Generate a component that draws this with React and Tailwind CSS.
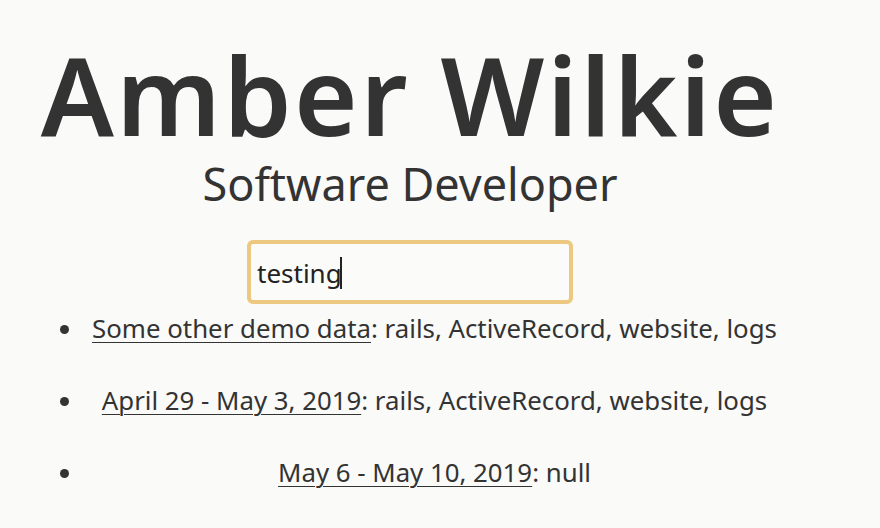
import React, { useState } from 'react';

const items = [
  { title: 'Some other demo data', tags: 'rails, ActiveRecord, website, logs' },
  { title: 'April 29 - May 3, 2019', tags: 'rails, ActiveRecord, website, logs' },
  { title: 'May 6 - May 10, 2019', tags: 'null' },
];

const App = () => {
  const [query, setQuery] = useState('testing');

  return (
    <div className="w-[880px] h-[528px] overflow-hidden bg-[#fafaf8] text-[#333333] font-['Noto_Sans',sans-serif]">
      {/* Header */}
      <div className="flex flex-col items-center pr-[60px]">
        <h1 className="mt-[44px] text-[109px] leading-[100px] font-semibold tracking-[2.4px]">Amber Wilkie</h1>
        <h2 className="mt-[15px] text-[45px] leading-[50px] font-normal">Software Developer</h2>
        <div className="relative mt-[31px]">
          <input
            value={query}
            onChange={(e) => setQuery(e.target.value)}
            className="w-[326px] h-[64px] px-[6px] pt-[2px] bg-[#fbfbf9] border-[4px] border-[#ecc880] rounded-[6px] text-[26px] outline-none text-[#222222]"
          />
          <span className="absolute left-[93px] top-[17px] w-[1.5px] h-[32px] bg-[#222222]" />
        </div>
      </div>

      {/* List */}
      <ul className="list-disc pl-[85px] pr-[96px] mt-[4px] text-center text-[25.8px] leading-[40px]">
        {items.map((item) => (
          <li key={item.title} className="mb-[32px] marker:text-[#333333]">
            <a href="#" className="underline underline-offset-[4px] decoration-[1px]">{item.title}</a>: {item.tags}
          </li>
        ))}
      </ul>
    </div>
  );
};

export default App;
